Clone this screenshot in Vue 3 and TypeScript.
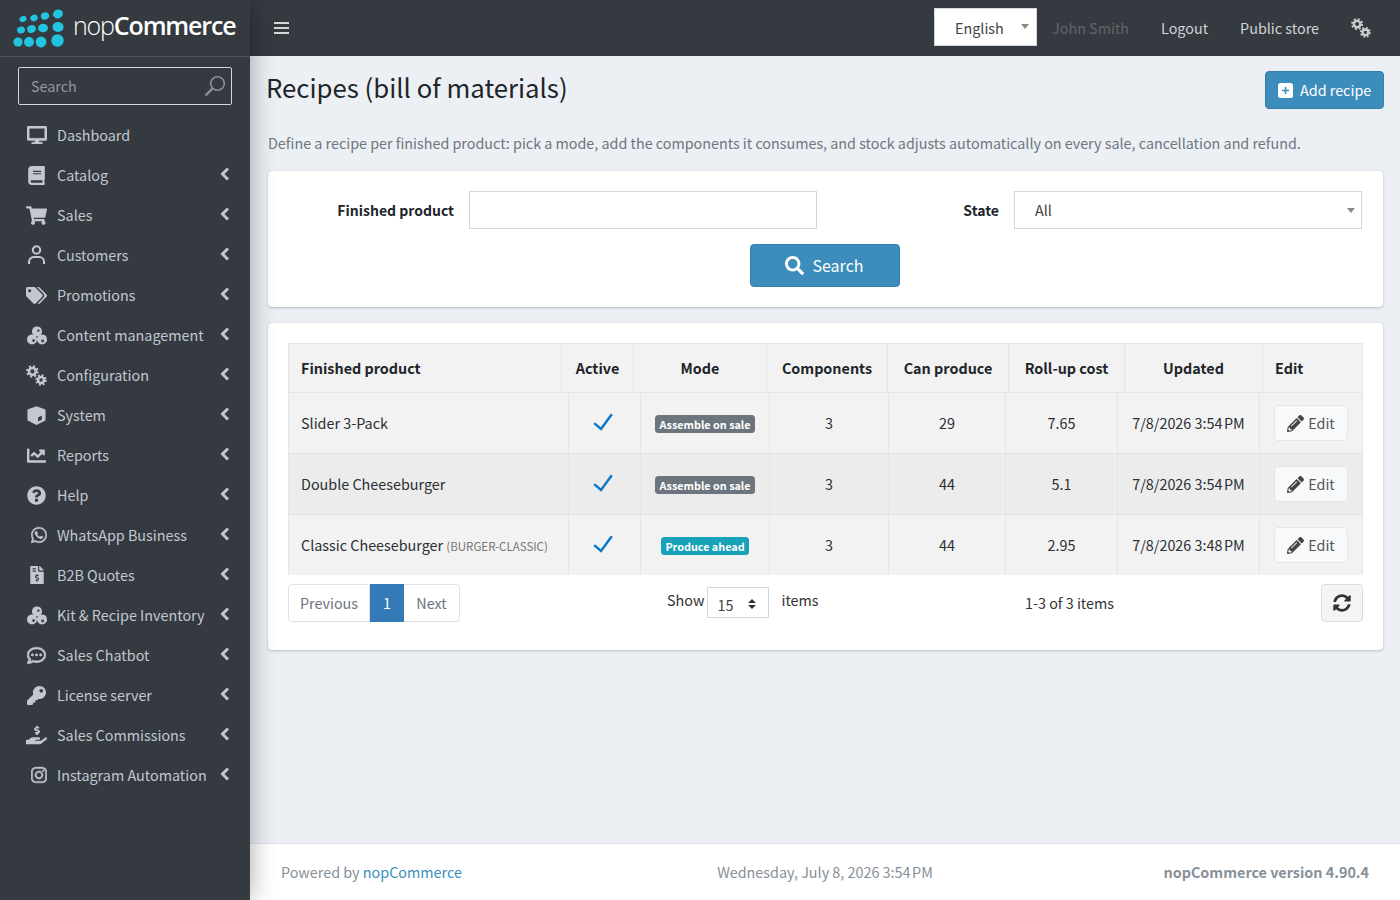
<script setup lang="ts">
interface MenuItem {
  label: string
  kind?: 'gears' | 'user' | 'blobs'
  vb?: string
  d?: string
  w?: number
  h?: number
  shift?: boolean
  even?: boolean
  heavy?: boolean
  chevron?: boolean
}

const menu: MenuItem[] = [
  { label: 'Dashboard', heavy: true, vb: '0 0 576 512', w: 20, h: 18, d: 'M528 0H48C21.5 0 0 21.5 0 48v320c0 26.5 21.5 48 48 48h192l-16 48h-72c-13.3 0-24 10.7-24 24s10.7 24 24 24h272c13.3 0 24-10.7 24-24s-10.7-24-24-24h-72l-16-48h192c26.5 0 48-21.5 48-48V48c0-26.5-21.5-48-48-48zm-16 352H64V64h448v288z' },
  { label: 'Catalog', chevron: true, vb: '0 0 448 512', w: 17, h: 19, d: 'M448 360V24c0-13.3-10.7-24-24-24H96C43 0 0 43 0 96v320c0 53 43 96 96 96h328c13.3 0 24-10.7 24-24v-16c0-7.5-3.5-14.3-8.9-18.7-4.2-15.4-4.2-59.3 0-74.7 5.4-4.3 8.9-11.1 8.9-18.6zM128 134c0-3.3 2.7-6 6-6h212c3.3 0 6 2.7 6 6v20c0 3.3-2.7 6-6 6H134c-3.3 0-6-2.7-6-6v-20zm0 64c0-3.3 2.7-6 6-6h212c3.3 0 6 2.7 6 6v20c0 3.3-2.7 6-6 6H134c-3.3 0-6-2.7-6-6v-20zm253.4 250H96c-17.7 0-32-14.3-32-32 0-17.6 14.4-32 32-32h285.4c-1.9 17.1-1.9 46.9 0 64z' },
  { label: 'Sales', chevron: true, vb: '0 0 576 512', w: 21, h: 19, d: 'M528.12 301.319l47.273-208C578.806 78.301 567.391 64 551.99 64H159.208l-9.166-44.81C147.758 8.021 137.93 0 126.529 0H24C10.745 0 0 10.745 0 24v16c0 13.255 10.745 24 24 24h69.883l70.248 343.435C147.325 417.1 136 435.222 136 456c0 30.928 25.072 56 56 56s56-25.072 56-56c0-15.674-6.447-29.835-16.824-40h209.647C430.447 426.165 424 440.326 424 456c0 30.928 25.072 56 56 56s56-25.072 56-56c0-22.172-12.888-41.332-31.579-50.405l5.517-24.276c3.413-15.018-8.002-29.319-23.403-29.319H218.117l-6.545-32h293.145c11.206 0 20.92-7.754 23.403-18.681z' },
  { label: 'Customers', chevron: true, kind: 'user' },
  { label: 'Promotions', chevron: true, vb: '0 0 640 512', w: 21, h: 17, d: 'M497.941 225.941L286.059 14.059A48 48 0 0 0 252.118 0H48C21.49 0 0 21.49 0 48v204.118a48 48 0 0 0 14.059 33.941l211.882 211.882c18.744 18.745 49.136 18.746 67.882 0l204.118-204.118c18.745-18.745 18.745-49.137 0-67.882zM112 160c-26.51 0-48-21.49-48-48s21.49-48 48-48 48 21.49 48 48-21.49 48-48 48zm513.941 133.823L421.823 497.941c-18.745 18.745-49.137 18.745-67.882 0l-.36-.36L527.64 323.522c16.999-16.999 26.36-39.6 26.36-63.64s-9.362-46.641-26.36-63.64L331.397 0h48.721a48 48 0 0 1 33.941 14.059l211.882 211.882c18.745 18.745 18.745 49.137 0 67.882z' },
  { label: 'Content management', chevron: true, kind: 'blobs' },
  { label: 'Configuration', chevron: true, kind: 'gears' },
  { label: 'System', chevron: true, vb: '0 0 512 512', w: 19, h: 19, even: true, d: 'M256 6L480 90Q500 98 500 120V370Q500 390 480 400L270 506Q256 512 242 506L32 400Q12 390 12 370V120Q12 98 32 90ZM300 420L400 370V260L300 305Z' },
  { label: 'Reports', chevron: true, vb: '0 0 512 512', w: 19, h: 19, d: 'M496 384H64V80c0-8.84-7.16-16-16-16H16C7.16 64 0 71.16 0 80v336c0 17.67 14.33 32 32 32h464c8.84 0 16-7.16 16-16v-32c0-8.84-7.16-16-16-16zM464 96H345.94c-21.38 0-32.09 25.85-16.97 40.97l32.4 32.4L288 242.75l-73.37-73.37c-12.5-12.5-32.76-12.5-45.25 0l-68.69 68.69c-6.25 6.25-6.25 16.38 0 22.63l22.62 22.62c6.25 6.25 16.38 6.25 22.63 0L192 237.25l73.37 73.37c12.5 12.5 32.76 12.5 45.25 0l96-96 32.4 32.4c15.12 15.12 40.97 4.41 40.97-16.97V112c.01-8.84-7.15-16-15.99-16z' },
  { label: 'Help', chevron: true, vb: '0 0 512 512', w: 19, h: 19, d: 'M504 256c0 136.997-111.043 248-248 248S8 392.997 8 256C8 119.083 119.043 8 256 8s248 111.083 248 248zM262.655 90c-54.497 0-89.255 22.957-116.549 63.758-3.536 5.286-2.353 12.415 2.715 16.258l34.699 26.31c5.205 3.947 12.621 3.008 16.665-2.122 17.864-22.658 30.113-35.797 57.303-35.797 20.429 0 45.698 13.148 45.698 32.958 0 14.976-12.363 22.667-32.534 33.976C247.128 238.528 216 254.941 216 296v4c0 6.627 5.373 12 12 12h56c6.627 0 12-5.373 12-12v-1.333c0-28.462 83.186-29.647 83.186-106.667 0-58.002-60.165-102-116.531-102zM256 338c-25.365 0-46 20.635-46 46 0 25.364 20.635 46 46 46s46-20.636 46-46c0-25.365-20.635-46-46-46z' },
  { label: 'WhatsApp Business', chevron: true, shift: true, heavy: true, vb: '0 0 448 512', w: 16, h: 18, d: 'M380.9 97.1C339 55.1 283.2 32 223.9 32c-122.4 0-222 99.6-222 222 0 39.1 10.2 77.3 29.6 111L0 480l117.7-30.9c32.4 17.7 68.9 27 106.1 27h.1c122.3 0 224.1-99.6 224.1-222 0-59.3-25.2-115-67.1-157zm-157 341.6c-33.2 0-65.7-8.9-94-25.7l-6.7-4-69.8 18.3L72 359.2l-4.4-7c-18.5-29.4-28.2-63.3-28.2-98.2 0-101.7 82.8-184.5 184.6-184.5 49.3 0 95.6 19.2 130.4 54.1 34.8 34.9 56.2 81.2 56.1 130.5 0 101.8-84.9 184.6-186.6 184.6zm101.2-138.2c-5.5-2.8-32.8-16.2-37.9-18-5.1-1.9-8.8-2.8-12.5 2.8-3.7 5.6-14.3 18-17.6 21.8-3.2 3.7-6.5 4.2-12 1.4-32.6-16.3-54-29.1-75.5-66-5.7-9.8 5.7-9.1 16.3-30.3 1.8-3.7.9-6.9-.5-9.7-1.4-2.8-12.5-30.1-17.1-41.2-4.5-10.8-9.1-9.3-12.5-9.5-3.2-.2-6.9-.2-10.6-.2-3.7 0-9.7 1.4-14.8 6.9-5.1 5.6-19.4 19-19.4 46.3 0 27.3 19.9 53.7 22.6 57.4 2.8 3.7 39.1 59.7 94.8 83.8 35.2 15.2 49 16.5 66.6 13.9 10.7-1.6 32.8-13.4 37.4-26.4 4.6-13 4.6-24.1 3.2-26.4-1.3-2.5-5-3.9-10.5-6.6z' },
  { label: 'B2B Quotes', chevron: true, vb: '0 0 384 512', w: 14, h: 18, d: 'M377 105L279.1 7c-4.5-4.5-10.6-7-17-7H256v128h128v-6.1c0-6.3-2.5-12.4-7-16.9zm-153 31V0H24C10.7 0 0 10.7 0 24v464c0 13.3 10.7 24 24 24h336c13.3 0 24-10.7 24-24V160H248c-13.2 0-24-10.8-24-24zM64 72c0-4.42 3.58-8 8-8h80c4.42 0 8 3.58 8 8v16c0 4.42-3.58 8-8 8H72c-4.42 0-8-3.58-8-8V72zm0 80v-16c0-4.42 3.58-8 8-8h80c4.42 0 8 3.58 8 8v16c0 4.42-3.58 8-8 8H72c-4.42 0-8-3.58-8-8zm144 263.88V440c0 4.42-3.58 8-8 8h-16c-4.42 0-8-3.58-8-8v-24.29c-11.29-.58-22.27-4.52-31.37-11.35-3.9-2.93-4.1-8.77-.57-12.14l11.75-11.21c2.77-2.64 6.89-2.76 10.13-.73 3.87 2.42 8.26 3.72 12.82 3.72h28.11c6.5 0 11.8-5.92 11.8-13.19 0-5.95-3.61-11.19-8.77-12.73l-45-13.5c-18.59-5.58-31.58-23.42-31.58-43.39 0-24.52 19.05-44.44 42.67-45.07V232c0-4.42 3.58-8 8-8h16c4.42 0 8 3.58 8 8v24.29c11.29.58 22.27 4.51 31.37 11.35 3.9 2.93 4.1 8.77.57 12.14l-11.75 11.21c-2.77 2.64-6.89 2.76-10.13.73-3.87-2.43-8.26-3.72-12.82-3.72h-28.11c-6.5 0-11.8 5.92-11.8 13.19 0 5.95 3.61 11.19 8.77 12.73l45 13.5c18.59 5.58 31.58 23.42 31.58 43.39 0 24.53-19.05 44.44-42.67 45.07z' },
  { label: 'Kit & Recipe Inventory', chevron: true, kind: 'blobs' },
  { label: 'Sales Chatbot', chevron: true, heavy: true, vb: '0 0 512 512', w: 19, h: 19, d: 'M144 208c-17.7 0-32 14.3-32 32s14.3 32 32 32 32-14.3 32-32-14.3-32-32-32zm112 0c-17.7 0-32 14.3-32 32s14.3 32 32 32 32-14.3 32-32-14.3-32-32-32zm112 0c-17.7 0-32 14.3-32 32s14.3 32 32 32 32-14.3 32-32-14.3-32-32-32zM256 32C114.6 32 0 125.1 0 240c0 47.6 19.9 91.2 52.9 126.3C38 405.7 7 439.1 6.5 439.5c-6.6 7-8.4 17.2-4.6 26S14.4 480 24 480c61.5 0 110-25.7 139.1-46.3C192 442.8 223.2 448 256 448c141.4 0 256-93.1 256-208S397.4 32 256 32zm0 368c-26.7 0-53.1-4.1-78.4-12.1l-22.7-7.2-19.5 13.8c-14.3 10.1-33.9 21.4-57.5 29 7.3-12.1 14.4-25.7 19.9-40.2l10.6-28.1-20.6-21.8C69.7 314.1 48 282.2 48 240c0-88.2 93.3-160 208-160s208 71.8 208 160-93.3 160-208 160z' },
  { label: 'License server', chevron: true, vb: '0 0 512 512', w: 19, h: 19, d: 'M512 176.001C512 273.203 433.202 352 336 352c-11.22 0-22.19-1.062-32.827-3.069l-24.012 27.014A23.999 23.999 0 0 1 261.223 384H224v40c0 13.255-10.745 24-24 24h-40v40c0 13.255-10.745 24-24 24H24c-13.255 0-24-10.745-24-24v-78.059c0-6.365 2.529-12.47 7.029-16.971l161.802-161.802C163.108 213.814 160 195.271 160 176 160 78.798 238.797.001 335.999 0 433.488-.001 512 78.511 512 176.001zM336 128c0 26.51 21.49 48 48 48s48-21.49 48-48-21.49-48-48-48-48 21.49-48 48z' },
  { label: 'Sales Commissions', chevron: true, vb: '0 0 576 512', w: 22, h: 20, d: 'M271.06,144.3l54.27,14.3a8.59,8.59,0,0,1,6.63,8.1c0,4.6-4.09,8.4-9.12,8.4h-35.6a30,30,0,0,1-11.19-2.2c-5.24-2.2-11.28-1.7-15.3,2l-19,17.5a11.68,11.68,0,0,0-2.25,2.66,11.42,11.42,0,0,0,3.88,15.74,83.77,83.77,0,0,0,34.51,11.5V240c0,8.8,7.83,16,17.37,16h17.37c9.55,0,17.38-7.2,17.38-16V222.4c32.93-3.6,57.84-31,53.5-63-3.15-23-22.46-41.3-46.56-47.7L282.68,97.4a8.59,8.59,0,0,1-6.63-8.1c0-4.6,4.09-8.4,9.12-8.4h35.6A30,30,0,0,1,332,83.1c5.23,2.2,11.28,1.7,15.3-2l19-17.5A11.31,11.31,0,0,0,368.47,61a11.43,11.43,0,0,0-3.84-15.78,83.82,83.82,0,0,0-34.52-11.5V16c0-8.8-7.82-16-17.37-16H295.37C285.82,0,278,7.2,278,16V33.6c-32.89,3.6-57.85,31-53.51,63C227.63,119.6,247,137.9,271.06,144.3ZM565.27,328.1c-11.8-10.7-30.2-10-42.6,0L430.27,402a63.64,63.64,0,0,1-40,14H272a16,16,0,0,1,0-32h78.29c15.9,0,30.71-10.9,33.25-26.6a31.2,31.2,0,0,0,.46-5.46A32,32,0,0,0,352,320H192a117.66,117.66,0,0,0-74.1,26.29L71.4,384H16A16,16,0,0,0,0,400v96a16,16,0,0,0,16,16H372.77a64,64,0,0,0,40-14L564,377a32,32,0,0,0,1.27-48.9Z' },
  { label: 'Instagram Automation', chevron: true, shift: true, heavy: true, vb: '0 0 448 512', w: 16, h: 18, d: 'M224.1 141c-63.6 0-114.9 51.3-114.9 114.9s51.3 114.9 114.9 114.9S339 319.5 339 255.9 287.7 141 224.1 141zm0 189.6c-41.1 0-74.7-33.5-74.7-74.7s33.5-74.7 74.7-74.7 74.7 33.5 74.7 74.7-33.6 74.7-74.7 74.7zm146.4-194.3c0 14.9-12 26.8-26.8 26.8-14.9 0-26.8-12-26.8-26.8s12-26.8 26.8-26.8 26.8 12 26.8 26.8zm76.1 27.2c-1.7-35.9-9.9-67.7-36.2-93.9-26.2-26.2-58-34.4-93.9-36.2-37-2.1-147.9-2.1-184.9 0-35.8 1.7-67.6 9.9-93.9 36.1s-34.4 58-36.2 93.9c-2.1 37-2.1 147.9 0 184.9 1.7 35.9 9.9 67.7 36.2 93.9s58 34.4 93.9 36.2c37 2.1 147.9 2.1 184.9 0 35.9-1.7 67.7-9.9 93.9-36.2 26.2-26.2 34.4-58 36.2-93.9 2.1-37 2.1-147.8 0-184.8zM398.8 388c-7.8 19.6-22.9 34.7-42.6 42.6-29.5 11.7-99.5 9-132.1 9s-102.7 2.6-132.1-9c-19.6-7.8-34.7-22.9-42.6-42.6-11.7-29.5-9-99.5-9-132.1s-2.6-102.7 9-132.1c7.8-19.6 22.9-34.7 42.6-42.6 29.5-11.7 99.5-9 132.1-9s102.7-2.6 132.1 9c19.6 7.8 34.7 22.9 42.6 42.6 11.7 29.5 9 99.5 9 132.1s2.7 102.7-9 132.1z' },
]

const headers = ['Finished product', 'Active', 'Mode', 'Components', 'Can produce', 'Roll-up cost', 'Updated', 'Edit']

const rows = [
  { name: 'Slider 3-Pack', sku: '', mode: 'Assemble on sale', ahead: false, components: 3, can: 29, cost: '7.65', updated: '7/8/2026 3:54\u202fPM' },
  { name: 'Double Cheeseburger', sku: '', mode: 'Assemble on sale', ahead: false, components: 3, can: 44, cost: '5.1', updated: '7/8/2026 3:54\u202fPM' },
  { name: 'Classic Cheeseburger', sku: '(BURGER-CLASSIC)', mode: 'Produce ahead', ahead: true, components: 3, can: 44, cost: '2.95', updated: '7/8/2026 3:48\u202fPM' },
]

const footerDate = 'Wednesday, July 8, 2026 3:54\u202fPM'

const searchPath = 'M505 442.7L405.3 343c-4.5-4.5-10.6-7-17-7H372c27.6-35.3 44-79.7 44-128C416 93.1 322.9 0 208 0S0 93.1 0 208s93.1 208 208 208c48.3 0 92.7-16.4 128-44v16.3c0 6.4 2.5 12.5 7 17l99.7 99.7c9.4 9.4 24.6 9.4 33.9 0l28.3-28.3c9.4-9.4 9.4-24.6.1-34zM208 336c-70.7 0-128-57.2-128-128 0-70.7 57.2-128 128-128 70.7 0 128 57.2 128 128 0 70.7-57.2 128-128 128z'
const penPath = 'M497.9 142.1l-46.1 46.1c-4.7 4.7-12.3 4.7-17 0l-111-111c-4.7-4.7-4.7-12.3 0-17l46.1-46.1c18.7-18.7 49.1-18.7 67.9 0l60.1 60.1c18.8 18.7 18.8 49.1 0 67.9zM284.2 99.8L21.6 362.4.4 483.9c-2.9 16.4 11.4 30.6 27.8 27.8l121.5-21.3 262.6-262.6c4.7-4.7 4.7-12.3 0-17l-111-111c-4.8-4.7-12.4-4.7-17.1 0zM124.1 339.9c-5.5-5.5-5.5-14.3 0-19.8l154-154c5.5-5.5 14.3-5.5 19.8 0s5.5 14.3 0 19.8l-154 154c-5.5 5.5-14.3 5.5-19.8 0zM88 424h48v36.3l-64.5 11.3-31.1-31.1L51.7 376H88v48z'
const syncPath = 'M370.72 133.28C339.458 104.008 298.888 87.962 255.848 88c-77.458.068-144.328 53.178-162.791 126.85-1.344 5.363-6.122 9.15-11.651 9.15H24.103c-7.498 0-13.194-6.807-11.807-14.176C33.933 94.924 134.813 8 256 8c66.448 0 126.791 26.136 171.315 68.685L463.03 40.97C478.149 25.851 504 36.559 504 57.941V192c0 13.255-10.745 24-24 24H345.941c-21.382 0-32.09-25.851-16.971-40.971l41.75-41.749zM32 296h134.059c21.382 0 32.09 25.851 16.971 40.971l-41.75 41.75c31.262 29.273 71.835 45.319 114.876 45.28 77.418-.07 144.315-53.144 162.787-126.849 1.344-5.363 6.122-9.15 11.651-9.15h57.304c7.498 0 13.194 6.807 11.807 14.176C478.067 417.076 377.187 504 256 504c-66.448 0-126.791-26.136-171.315-68.685L48.97 471.03C33.851 486.149 8 475.441 8 454.059V320c0-13.255 10.745-24 24-24z'
</script>

<template>
  <div class="shell">
    <aside class="sidebar">
      <div class="brand">
        <svg class="brand-mark" width="54" height="40" viewBox="12 8 54 40" fill="#22c4e0">
          <ellipse cx="23" cy="19" rx="3.6" ry="3" transform="rotate(-20 23 19)" />
          <ellipse cx="34" cy="18" rx="3.8" ry="3.2" transform="rotate(-20 34 18)" />
          <ellipse cx="45" cy="16" rx="4.2" ry="3.6" transform="rotate(-20 45 16)" />
          <ellipse cx="58" cy="14" rx="5" ry="4.4" transform="rotate(-15 58 14)" />
          <ellipse cx="21" cy="30" rx="4" ry="3.4" transform="rotate(-15 21 30)" />
          <ellipse cx="31.5" cy="29" rx="4.4" ry="3.8" transform="rotate(-15 31.5 29)" />
          <ellipse cx="43" cy="28" rx="5" ry="4.3" transform="rotate(-10 43 28)" />
          <ellipse cx="58" cy="27" rx="5.6" ry="5" />
          <circle cx="18" cy="42" r="4.6" />
          <circle cx="29" cy="42" r="5" />
          <circle cx="41" cy="42" r="5.4" />
          <circle cx="57.5" cy="40.5" r="6.2" />
        </svg>
        <span class="brand-text"><span class="brand-thin">nop</span><span class="brand-bold">Commerce</span></span>
      </div>

      <div class="side-search">
        <input class="side-input" type="text" placeholder="Search" />
        <svg width="22" height="22" viewBox="0 0 22 22" fill="none" stroke="#8d9198" stroke-width="1.6">
          <circle cx="13.5" cy="8.5" r="6.8" />
          <path d="M8.6 13.4L1.5 20.5" stroke-width="2.4" />
        </svg>
      </div>

      <nav class="menu">
        <a v-for="item in menu" :key="item.label" class="menu-item">
          <span class="menu-icon" :class="{ shift: item.shift }">
            <svg v-if="item.kind === 'user'" width="19" height="20" viewBox="0 0 19 20" fill="none" stroke="currentColor" stroke-width="2.1">
              <circle cx="9.5" cy="5" r="3.7" />
              <path d="M2 19v-2.2a4.8 4.8 0 0 1 4.8-4.8h5.4a4.8 4.8 0 0 1 4.8 4.8V19" />
            </svg>
            <svg v-else-if="item.kind === 'gears'" width="23" height="23" viewBox="0 0 23 23" fill="none" stroke="currentColor">
              <circle cx="7" cy="7" r="3.7" stroke-width="2.8" />
              <circle cx="7" cy="7" r="5.8" stroke-width="2.2" stroke-dasharray="2.28 2.28" />
              <circle cx="16.5" cy="16.5" r="3.3" stroke-width="2.8" />
              <circle cx="16.5" cy="16.5" r="5.2" stroke-width="2.2" stroke-dasharray="2.04 2.04" />
            </svg>
            <svg v-else-if="item.kind === 'blobs'" width="20" height="19" viewBox="0 0 20 19" fill="currentColor">
              <circle cx="10" cy="5.4" r="5" />
              <circle cx="5" cy="13.4" r="5" />
              <circle cx="15" cy="13.4" r="5" />
              <circle cx="6.6" cy="14.6" r="1.4" fill="#343a40" />
              <circle cx="15.6" cy="15" r="1.4" fill="#343a40" />
              <circle cx="11.4" cy="4.6" r="1.2" fill="#343a40" />
            </svg>
            <svg v-else :class="{ heavy: item.heavy }" :width="item.w" :height="item.h" :viewBox="item.vb" fill="currentColor">
              <path :d="item.d" :fill-rule="item.even ? 'evenodd' : 'nonzero'" />
            </svg>
          </span>
          <span class="menu-label">{{ item.label }}</span>
          <svg v-if="item.chevron" class="chevron" width="10" height="14" viewBox="0 0 10 14" fill="none" stroke="currentColor" stroke-width="3">
            <path d="M8 1.5L2.5 7L8 12.5" />
          </svg>
        </a>
      </nav>
    </aside>

    <div class="main">
      <header class="topbar">
        <span class="burger"><i></i><i></i><i></i></span>
        <div class="topnav">
          <div class="lang">English<span class="caret"></span></div>
          <span class="user-name">John Smith</span>
          <a class="toplink">Logout</a>
          <a class="toplink">Public store</a>
          <svg class="top-gears" width="20" height="20" viewBox="0 0 23 23" fill="none" stroke="#c9cbcd">
            <circle cx="7" cy="7" r="3.7" stroke-width="2.8" />
            <circle cx="7" cy="7" r="5.8" stroke-width="2.2" stroke-dasharray="2.28 2.28" />
            <circle cx="16.5" cy="16.5" r="3.3" stroke-width="2.8" />
            <circle cx="16.5" cy="16.5" r="5.2" stroke-width="2.2" stroke-dasharray="2.04 2.04" />
          </svg>
        </div>
      </header>

      <main class="content">
        <div class="title-row">
          <h1 class="title">Recipes (bill of materials)</h1>
          <button class="btn-add" type="button">
            <svg class="plus" width="15" height="15" viewBox="0 0 15 15"><rect width="15" height="15" rx="2.5" fill="#fff" /><path d="M7.5 4v7M4 7.5h7" stroke="#3c8dbc" stroke-width="1.6" /></svg>
            Add recipe
          </button>
        </div>
        <p class="desc">Define a recipe per finished product: pick a mode, add the components it consumes, and stock adjusts automatically on every sale, cancellation and refund.</p>

        <section class="card search-card">
          <div class="filters">
            <label class="filter-label">Finished product</label>
            <input class="field" type="text" />
            <label class="filter-label">State</label>
            <div class="field select-field">All<span class="caret caret-grey"></span></div>
          </div>
          <button class="btn-search" type="button">
            <svg width="19" height="19" viewBox="0 0 512 512" fill="#fff"><path :d="searchPath" /></svg>
            <span class="search-text">Search</span>
          </button>
        </section>

        <section class="card table-card">
          <table class="grid grid-head">
            <colgroup><col v-for="h in headers" :key="h" /></colgroup>
            <thead>
              <tr><th v-for="h in headers" :key="h">{{ h }}</th></tr>
            </thead>
          </table>
          <table class="grid grid-body">
            <colgroup><col v-for="h in headers" :key="h" /></colgroup>
            <tbody>
              <tr v-for="r in rows" :key="r.name">
                <td>{{ r.name }} <span v-if="r.sku" class="sku">{{ r.sku }}</span></td>
                <td class="center">
                  <svg class="check" width="20" height="18" viewBox="0 0 20 18" fill="none" stroke="#0a78c8" stroke-width="2.4">
                    <path d="M1.2 10.2L8 16L18.8 1.2" />
                  </svg>
                </td>
                <td class="center mode-cell"><span class="badge" :class="{ ahead: r.ahead }">{{ r.mode }}</span></td>
                <td class="center">{{ r.components }}</td>
                <td class="center">{{ r.can }}</td>
                <td class="center">{{ r.cost }}</td>
                <td class="center">{{ r.updated }}</td>
                <td class="center">
                  <button class="btn-edit" type="button">
                    <svg width="17" height="17" viewBox="0 0 512 512" fill="#444"><path :d="penPath" fill-rule="nonzero" /></svg>
                    Edit
                  </button>
                </td>
              </tr>
            </tbody>
          </table>

          <div class="pager-row">
            <div class="pager">
              <a class="page-link prev">Previous</a>
              <a class="page-link active">1</a>
              <a class="page-link next">Next</a>
            </div>
            <div class="show">
              <span>Show</span>
              <div class="size-select">15<span class="updown"></span></div>
              <span class="items">items</span>
            </div>
            <div class="count">1-3 of 3 items</div>
            <button class="btn-refresh" type="button">
              <svg width="18" height="18" viewBox="0 0 512 512" fill="#333"><path :d="syncPath" /></svg>
            </button>
          </div>
        </section>
      </main>

      <footer class="footer">
        <div>Powered by <a class="foot-link">nopCommerce</a></div>
        <div>{{ footerDate }}</div>
        <div class="version">nopCommerce version 4.90.4</div>
      </footer>
    </div>
  </div>
</template>

<style>
html,
body {
  margin: 0;
  height: 100%;
  overflow: hidden;
}
</style>

<style scoped>
.shell {
  display: flex;
  height: 900px;
  font-family: "Noto Sans CJK SC", "Noto Sans CJK JP", "Noto Sans", sans-serif;
  font-size: 14.36px;
  line-height: 24px;
  color: #212529;
  background: #ecf0f5;
}

.sidebar {
  position: relative;
  z-index: 2;
  flex: 0 0 250px;
  width: 250px;
  min-width: 0;
  background: #343a40;
  box-shadow: 0 0 24px rgba(0, 0, 0, 0.35);
}

.brand {
  display: flex;
  align-items: center;
  height: 56px;
  padding-left: 12px;
  border-bottom: 1px solid #4b545c;
  box-sizing: content-box;
}

.brand-mark {
  flex: none;
}

.brand-text {
  margin-left: 7px;
  margin-top: -6px;
  font-family: "Open Sans", sans-serif;
  font-size: 25px;
  line-height: 30px;
  letter-spacing: -1.15px;
  color: #fff;
}

.brand-thin {
  font-weight: 300;
}

.brand-bold {
  font-weight: 600;
}

.side-search {
  display: flex;
  align-items: center;
  box-sizing: border-box;
  width: 214px;
  height: 38px;
  margin: 10px 0 10px 18px;
  padding: 0 5px 0 12px;
  border: 1px solid #d4d6d8;
  border-radius: 2px;
}

.side-input {
  flex: 1;
  min-width: 0;
  padding: 0;
  border: 0;
  outline: 0;
  background: transparent;
  font: inherit;
  color: #fff;
}

.side-input::placeholder {
  color: #9297a0;
  opacity: 1;
}

.menu-item {
  display: flex;
  align-items: center;
  height: 40px;
  padding: 0 20px 0 26px;
  color: #c2c7d0;
}

.menu-icon {
  display: flex;
  flex: none;
  align-items: center;
  justify-content: center;
  width: 21px;
  margin-right: 10px;
}

.menu-icon.shift {
  padding-left: 5px;
  box-sizing: border-box;
}

.heavy {
  stroke: currentColor;
  stroke-width: 14;
}

.menu-label {
  flex: 1;
  white-space: nowrap;
}

.chevron {
  flex: none;
  margin: -2px 0 0 0;
}

.main {
  display: flex;
  flex: 1;
  flex-direction: column;
  min-width: 0;
}

.topbar {
  display: flex;
  flex: none;
  align-items: center;
  height: 56px;
  padding: 0 29px 0 24px;
  background: #343a40;
}

.burger {
  display: flex;
  flex-direction: column;
  gap: 3px;
  width: 15px;
}

.burger i {
  display: block;
  height: 2px;
  background: #d3d5d7;
}

.topnav {
  display: flex;
  align-items: center;
  gap: 32px;
  margin-left: auto;
}

.lang {
  position: relative;
  box-sizing: border-box;
  width: 103px;
  height: 38px;
  margin-top: -2px;
  margin-right: -17px;
  padding: 0 20px;
  border: 1px solid #d2d6de;
  background: #fff;
  color: #444;
  line-height: 38px;
}

.caret {
  position: absolute;
  top: 15px;
  right: 7px;
  border-top: 5px solid #888;
  border-right: 4px solid transparent;
  border-left: 4px solid transparent;
}

.user-name {
  color: #60656a;
}

.toplink {
  color: #d0d2d4;
}

.top-gears {
  flex: none;
}

.content {
  flex: 1;
  padding: 15px 16px 0 18px;
}

.title-row {
  display: flex;
  align-items: center;
  justify-content: space-between;
  height: 38px;
}

.title {
  margin: -6px 0 0 -2px;
  font-size: 25.75px;
  font-weight: 400;
  line-height: 36px;
  color: #212529;
}

.btn-add {
  display: flex;
  align-items: center;
  gap: 7px;
  box-sizing: border-box;
  width: 119px;
  height: 38px;
  padding: 0 12px;
  border: 1px solid #367fa9;
  border-radius: 4px;
  background: #3c8dbc;
  color: #fff;
  font: inherit;
  white-space: nowrap;
}

.plus {
  flex: none;
}

.desc {
  margin: 22px 0 16px;
  color: #6c757d;
  font-size: 14.33px;
}

.card {
  margin-right: 1px;
  border-radius: 4px;
  background: #fff;
  box-shadow: 0 0 1px rgba(0, 0, 0, 0.13), 0 1px 3px rgba(0, 0, 0, 0.2);
}

.search-card {
  display: flex;
  flex-direction: column;
  align-items: center;
  gap: 15px;
  padding: 20px 21px 20px 15px;
  margin-bottom: 16px;
}

.filters {
  display: grid;
  grid-template-columns: 171px 348px 167px 348px;
  column-gap: 15px;
  align-items: center;
  align-self: stretch;
}

.filter-label {
  font-size: 14px;
  font-weight: 700;
  text-align: right;
}

.field {
  position: relative;
  box-sizing: border-box;
  height: 38px;
  padding: 0 20px;
  border: 1px solid #d2d6de;
  background: #fff;
  color: #444;
  font: inherit;
  line-height: 36px;
  outline: 0;
}

.caret-grey {
  top: 16px;
  right: 6px;
}

.btn-search {
  display: flex;
  align-items: center;
  justify-content: center;
  gap: 8px;
  box-sizing: border-box;
  width: 150px;
  height: 43px;
  margin-left: 4px;
  border: 1px solid #367fa9;
  border-radius: 4px;
  background: #3c8dbc;
  color: #fff;
  font: inherit;
  font-size: 16px;
}

.search-text {
  margin-top: -2px;
}

.table-card {
  padding: 20px 20px 28px;
}

.grid {
  width: 100%;
  border-spacing: 0;
  border-collapse: separate;
  table-layout: fixed;
  background: #f2f2f2;
}

.grid-head col:nth-child(1) { width: 274px; }
.grid-head col:nth-child(2) { width: 72px; }
.grid-head col:nth-child(3) { width: 133px; }
.grid-head col:nth-child(4) { width: 121px; }
.grid-head col:nth-child(5) { width: 121px; }
.grid-head col:nth-child(6) { width: 116px; }
.grid-head col:nth-child(7) { width: 138px; }
.grid-head col:nth-child(8) { width: 100px; }

.grid-body col:nth-child(1) { width: 281px; }
.grid-body col:nth-child(2) { width: 72px; }
.grid-body col:nth-child(3) { width: 129px; }
.grid-body col:nth-child(4) { width: 119px; }
.grid-body col:nth-child(5) { width: 117px; }
.grid-body col:nth-child(6) { width: 112px; }
.grid-body col:nth-child(7) { width: 142px; }
.grid-body col:nth-child(8) { width: 103px; }

.grid th {
  box-sizing: border-box;
  height: 50px;
  padding: 0 12px;
  border-top: 1px solid #e3e5e8;
  border-right: 1px solid #e3e5e8;
  border-bottom: 1px solid #e3e5e8;
  font-weight: 700;
  text-align: center;
  white-space: nowrap;
}

.grid th:first-child,
.grid th:last-child {
  text-align: left;
}

.grid th:first-child,
.grid td:first-child {
  border-left: 1px solid #e3e5e8;
}

.grid td {
  box-sizing: border-box;
  height: 61px;
  padding: 0 12px;
  border-right: 1px solid #e3e5e8;
  border-bottom: 1px solid #e3e5e8;
  vertical-align: middle;
  white-space: nowrap;
  color: #2b2f33;
}

.grid tr:last-child td {
  height: 60px;
  border-bottom: 0;
}

.grid tr:nth-child(2) td {
  background: #ececec;
}

.center {
  text-align: center;
}

.grid td.center {
  padding: 0;
}

.sku {
  color: #777;
  font-size: 11.52px;
}

.check {
  display: block;
  margin: -2px 0 0 calc(50% - 12px);
}

.badge {
  display: inline-block;
  margin-top: -2px;
  padding: 0 4px;
  border-radius: 3.5px;
  background: #6c757d;
  color: #fff;
  font-size: 10.8px;
  font-weight: 700;
  line-height: 18px;
  vertical-align: middle;
}

.badge.ahead {
  padding: 0 4px;
  background: #17a2b8;
}

.btn-edit {
  display: inline-flex;
  align-items: center;
  justify-content: center;
  gap: 4px;
  box-sizing: border-box;
  width: 74px;
  height: 36px;
  padding: 0;
  border: 1px solid #e3e5e8;
  border-radius: 4px;
  background: #f8f9fa;
  color: #555;
  font: inherit;
  vertical-align: middle;
}

.pager-row {
  display: grid;
  grid-template-columns: 379px 358px 1fr auto;
  align-items: start;
  margin-top: 9px;
}

.pager {
  display: flex;
  justify-self: start;
  height: 38px;
}

.page-link {
  box-sizing: border-box;
  height: 38px;
  border: 1px solid #dee2e6;
  border-left: 0;
  background: #fff;
  color: #6c757d;
  line-height: 35px;
  text-align: center;
}

.prev {
  width: 82px;
  border-left: 1px solid #dee2e6;
  border-radius: 4px 0 0 4px;
}

.next {
  width: 56px;
  border-radius: 0 4px 4px 0;
}

.page-link.active {
  width: 34px;
  padding-left: 1px;
  border-color: #337ab7;
  background: #337ab7;
  color: #fff;
}

.show {
  display: flex;
  align-items: flex-start;
  gap: 3px;
  padding-top: 4px;
  color: #333;
}

.size-select {
  position: relative;
  box-sizing: border-box;
  width: 62px;
  height: 31px;
  margin-top: -1px;
  padding: 2px 9px 0;
  border: 1px solid #d2d6de;
  color: #444;
  line-height: 30px;
}

.updown {
  position: absolute;
  top: 11px;
  right: 12px;
  width: 0;
  height: 0;
  border-right: 4px solid transparent;
  border-bottom: 4px solid #333;
  border-left: 4px solid transparent;
}

.updown::after {
  content: "";
  position: absolute;
  top: 6px;
  left: -4px;
  border-top: 4px solid #333;
  border-right: 4px solid transparent;
  border-left: 4px solid transparent;
}

.items {
  margin-left: 9px;
}

.count {
  padding-top: 7px;
  color: #333;
}

.btn-refresh {
  display: flex;
  align-items: center;
  justify-content: center;
  box-sizing: border-box;
  width: 42px;
  height: 38px;
  padding: 0;
  border: 1px solid #ddd;
  border-radius: 4px;
  background: #f4f4f4;
}

.footer {
  display: grid;
  flex: none;
  grid-template-columns: 1fr auto 1fr;
  align-items: center;
  box-sizing: border-box;
  height: 57px;
  padding: 0 31px;
  border-top: 1px solid #dee2e6;
  background: #fff;
  color: #869099;
}

.foot-link {
  color: #3c8dbc;
}

.version {
  font-weight: 700;
  text-align: right;
}
</style>
